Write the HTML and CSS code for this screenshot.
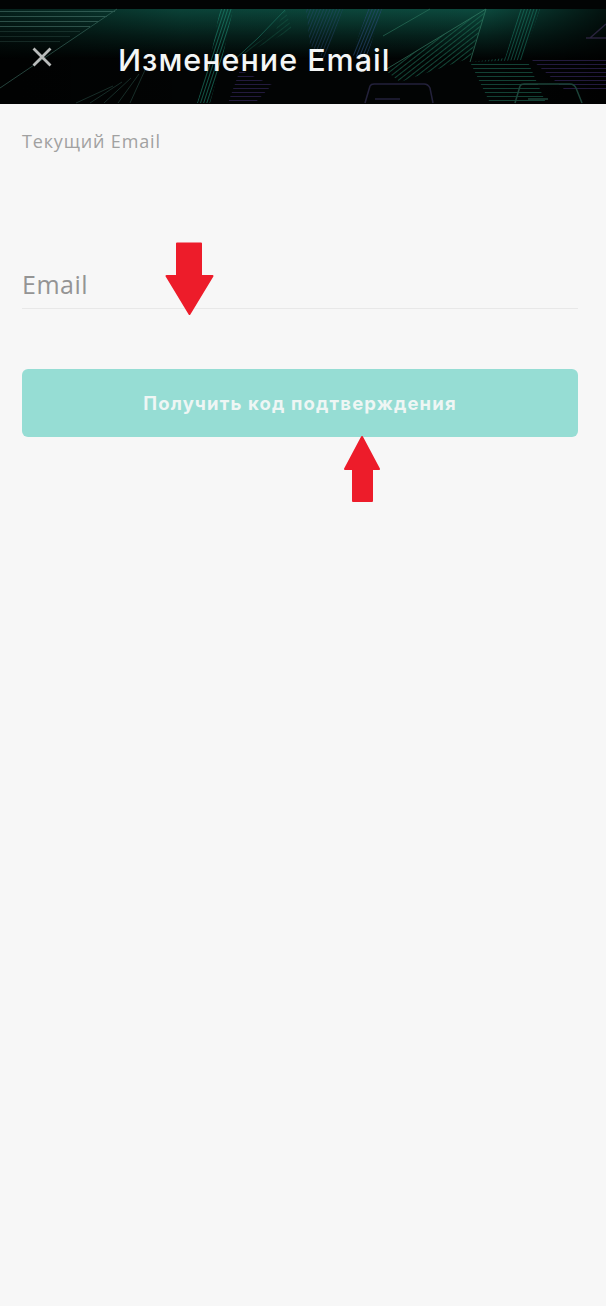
FILE: index.html
```html
<!DOCTYPE html>
<html lang="ru">
<head>
<meta charset="utf-8">
<title>Изменение Email</title>
<link rel="stylesheet" href="styles.css">
</head>
<body>
<div class="screen">
  <header class="header">
    <svg class="header-art" width="606" height="104" viewBox="0 0 606 104" aria-hidden="true">
      <defs>
        <linearGradient id="glow" x1="0" y1="0" x2="0" y2="1">
          <stop offset="0" stop-color="#0c4a3e"/>
          <stop offset="0.55" stop-color="#05201b" />
          <stop offset="1" stop-color="#010303"/>
        </linearGradient>
        <linearGradient id="side" x1="0" y1="0" x2="1" y2="0">
          <stop offset="0" stop-color="#000" stop-opacity=".55"/>
          <stop offset="0.3" stop-color="#000" stop-opacity=".1"/>
          <stop offset="0.8" stop-color="#000" stop-opacity="0"/>
          <stop offset="1" stop-color="#000" stop-opacity=".75"/>
        </linearGradient>
        <pattern id="hatchA" width="3" height="3" patternUnits="userSpaceOnUse" patternTransform="rotate(18)">
          <rect width="1" height="3" fill="#1e8a72"/>
        </pattern>
        <pattern id="hatchB" width="4" height="4" patternUnits="userSpaceOnUse" patternTransform="rotate(-38)">
          <rect width="4" height="1" fill="#1f7459"/>
        </pattern>
        <pattern id="hatchC" width="3" height="3" patternUnits="userSpaceOnUse" patternTransform="rotate(22)">
          <rect width="1" height="3" fill="#2a4a7a"/>
        </pattern>
        <pattern id="hatchD" width="4" height="4" patternUnits="userSpaceOnUse">
          <rect width="4" height="1" fill="#1d6b55"/>
        </pattern>
        <pattern id="hatchE" width="4" height="4" patternUnits="userSpaceOnUse">
          <rect width="4" height="1" fill="#3a2a66"/>
        </pattern>
      </defs>
      <rect y="9" width="606" height="50" fill="url(#glow)"/>
      <rect y="9" width="606" height="95" fill="url(#side)"/>
      <g class="art-lines">
        <g stroke="#5f8f84" fill="none" stroke-width="1">
          <path d="M0 11.500H115M0 16.500H107M0 21.500H98M0 26.500H90" opacity=".75"/>
          <path d="M0 31.500H80M0 36.500H70M0 41.500H60" opacity=".35"/>
          <path d="M117 9L0 88" stroke="#3d6f63"/>
          <path d="M145 70L130 103M139 74L118 103M131 78L104 103M122 82L90 103M113 86L76 103" stroke="#2f5a50" opacity=".8"/>
        </g>
        <polygon points="220,9 233,9 222,60 210,103 197,103 212,50" fill="url(#hatchA)"/>
        <polygon points="232,60 292,30 285,9 275,32 245,50" fill="url(#hatchB)" opacity=".5"/>
        <path d="M232 62L258 38L285 10" stroke="#1f7a68" fill="none"/>
        <polygon points="240,70 272,85 255,103 228,103" fill="url(#hatchE)"/>
        <polygon points="306,9 343,9 325,60 310,45" fill="url(#hatchC)" opacity=".7"/>
        <polygon points="368,9 382,9 366,60 352,55" fill="url(#hatchC)"/>
        <path d="M383 36L430 9" stroke="#2f7a62" fill="none"/>
        <polygon points="385,70 486,9 470,58 400,82" fill="url(#hatchB)"/>
        <path d="M385 70L486 9L470 62" stroke="#3b8a6e" fill="none"/>
        <polygon points="520,9 540,9 522,60 470,62 505,58" fill="url(#hatchA)" opacity=".8"/>
        <polygon points="470,62 528,62 546,103 490,103" fill="url(#hatchD)"/>
        <polygon points="532,60 606,60 606,90 565,90" fill="url(#hatchE)"/>
        <g fill="none" stroke-width="1.500">
          <path d="M365 103L370 86Q371 84 374 84H424Q428 84 430 88L433 103" stroke="#3a3560"/>
          <path d="M515 103L520 86Q521 84 524 84H570Q574 84 576 88L582 103" stroke="#2f6f5e"/>
          <path d="M375 99H400" stroke="#3a3560"/>
          <path d="M528 99H548" stroke="#2f6f5e"/>
          <path d="M590 38L606 24M586 38H606" stroke="#43335f"/>
        </g>
      </g>
    </svg>
    <button class="close" type="button" aria-label="Закрыть">
      <svg width="22" height="22" viewBox="0 0 22 22" aria-hidden="true">
        <path d="M2.500 2.500L19.500 19.500M19.500 2.500L2.500 19.500" stroke="#b9bcbb" stroke-width="2.800" fill="none"/>
      </svg>
    </button>
    <h1 class="title">Изменение Email</h1>
  </header>
  <main class="content">
    <p class="current">Текущий Email</p>
    <div class="field"><span class="placeholder">Email</span></div>
    <button class="submit" type="button">Получить код подтверждения</button>
  </main>
  <svg class="arrow arrow-down" width="50" height="74" viewBox="0 0 50 74" aria-hidden="true">
    <path d="M12 1.500H36V34H47.500L24.500 72L1.500 34H12Z" fill="#ed1c2a" stroke="#ed1c2a" stroke-width="2" stroke-linejoin="round"/>
  </svg>
  <svg class="arrow arrow-up" width="38" height="68" viewBox="0 0 38 68" aria-hidden="true">
    <path d="M19 2L36 34H29V66H10V34H2Z" fill="#ed1c2a" stroke="#ed1c2a" stroke-width="2" stroke-linejoin="round"/>
  </svg>
</div>
</body>
</html>
```
FILE: styles.css
```css
* {
  box-sizing: border-box;
}
html, body {
  margin: 0;
  padding: 0;
}
body {
  background: #f7f7f7;
  font-family: "Inter", "Liberation Sans", sans-serif;
}
.screen {
  position: relative;
  width: 606px;
  height: 1306px;
  overflow: hidden;
  background: #f7f7f7;
}
.header {
  position: relative;
  height: 104px;
  background: #020404;
  display: flex;
  align-items: center;
  padding: 10px 0 0 31px;
}
.header-art {
  position: absolute;
  left: 0;
  top: 0;
}
.art-lines {
  opacity: 0.6;
  filter: blur(0.5px);
}
.close {
  position: relative;
  display: flex;
  width: 22px;
  height: 22px;
  padding: 0;
  border: 0;
  background: none;
}
.title {
  position: relative;
  margin: 5px 0 0 65px;
  font-size: 30.500px;
  line-height: 36px;
  font-weight: 500;
  letter-spacing: 1px;
  color: #f4f6f6;
  white-space: nowrap;
}
.content {
  padding: 0 28px 0 22px;
  display: flex;
  flex-direction: column;
}
.current {
  margin: 26px 0 0;
  font-size: 18px;
  line-height: 22px;
  letter-spacing: 0.85px;
  color: #a1a1a1;
  font-family: "Open Sans", sans-serif;
}
.field {
  margin-top: 115px;
  height: 42px;
  border-bottom: 1px solid #e8e8e8;
}
.placeholder {
  font-family: "Open Sans", sans-serif;
  font-size: 25px;
  line-height: 34px;
  letter-spacing: 0.5px;
  color: #949494;
}
.submit {
  margin-top: 60px;
  height: 68px;
  border: 0;
  border-radius: 6px;
  background: #96ddd4;
  color: #eef6f4;
  font-family: "Inter", sans-serif;
  font-size: 18.500px;
  font-weight: 700;
  letter-spacing: 1.150px;
}
.arrow {
  position: absolute;
}
.arrow-down {
  left: 165px;
  top: 242px;
}
.arrow-up {
  left: 343px;
  top: 435px;
}
```
